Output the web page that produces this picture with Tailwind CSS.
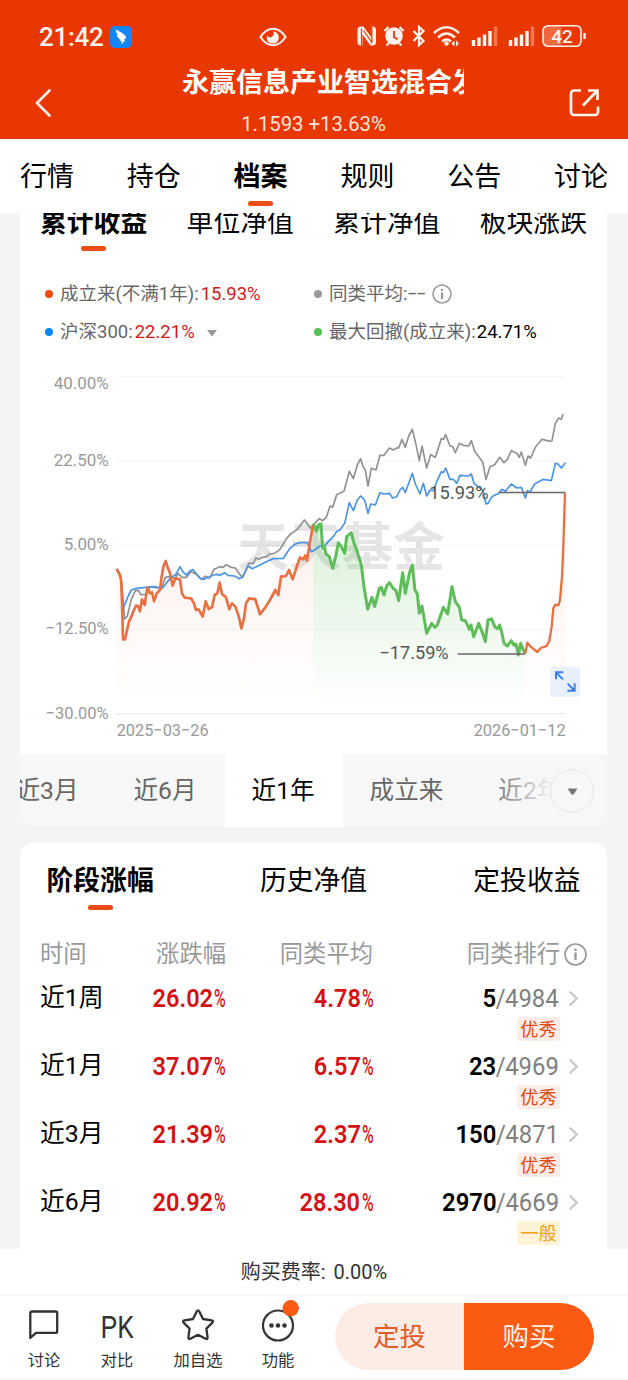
<!DOCTYPE html>
<html lang="zh-CN">
<head>
<meta charset="utf-8">
<meta name="viewport" content="width=device-width, initial-scale=1">
<title>基金档案</title>
<script src="https://cdn.jsdelivr.net/npm/@tailwindcss/browser@4"></script>
</head>
<body class="w-[628px] h-[1380px] overflow-hidden bg-white text-black font-['Roboto','Noto_Sans_CJK_SC',sans-serif]">

<!-- header -->
<header class="h-[139px] bg-[#e83700] text-[#fff3ee] overflow-hidden">
  <div class="h-[63px] pt-[11px] relative flex items-center">
    <span class="ml-[39px] text-[26px] leading-[26px] w-[65px] font-medium tracking-[-0.3px] whitespace-nowrap">21:42</span>
    <svg class="ml-[6px] w-[22px] h-[22px]" viewBox="0 0 22 22"><rect width="22" height="22" rx="5" fill="#1386fb"/><path d="M5.500 3.500C10 5 14 8 16 10.500c.3.500 0 1-.3 1.500l-1.800 2.200h1.600L11 18.500l.8-3-1.600-.4.4-1.200C8.500 12.500 7 10.500 6.700 8.800l1.500.3C6.800 7.500 5.800 5.500 5.500 3.500z" fill="#fff"/></svg>
    <svg class="ml-[127px] w-[28px] h-[20px]" viewBox="0 0 28 20"><path d="M1.500 10C5 4.500 9 1.800 14 1.800S23 4.500 26.500 10C23 15.500 19 18.200 14 18.200S5 15.500 1.500 10z" fill="none" stroke="#fff3ee" stroke-width="2"/><path d="M14.500 4.200c3.500.8 5.300 3.200 5.300 6.200 0 3.600-2.600 6.200-6 6.200-3.500 0-6-2.400-6-5.600 0-1 .2-1.800.6-2.600.8 1.400 1.800 2 3 1.900 2.200-.2 3.800-2.500 3.100-6.100z" fill="#fff3ee"/></svg>
    <svg class="ml-[70px] w-[234px] h-[26px]" viewBox="357 24 234 26" fill="none" stroke="#fff3ee">
      <path d="M361 26.500h2.500l8 11V26.500h1.500a3.500 3.500 0 0 1 3 3.500v12a3.500 3.500 0 0 1-3 3.500h-2.500l-8-11v11H361a3.500 3.500 0 0 1-3.500-3.500V30a3.500 3.500 0 0 1 3.500-3.500z" fill="#fff3ee" stroke="none"/><path d="M361.500 28.500v17M371.800 26.500v17M363.500 30.500l8.500 12" stroke="#e83700" stroke-width="1.200"/>
      <circle cx="394" cy="36" r="8" fill="#fff3ee" stroke-width="1.500"/><path d="M394 31v6l3.500 2.500" stroke="#e83700" stroke-width="1.800"/><path d="M384.500 31l4-4M403.500 31l-4-4M389 43l-2.500 2.500M399 43l2.500 2.500" stroke-width="2.200"/>
      <path d="M413.500 31l10 10-4.500 4V27l4.500 4-10 10" stroke-width="2.200"/>
      <path d="M434 33q12.500-11.500 25 0M438 37.500q8.500-8 17 0M442 41.500q4.500-4 9 0" stroke-width="2.500"/><circle cx="446.500" cy="43.500" r="2.300" fill="#fff3ee" stroke="none"/><path d="M454.500 40.500v6l-3-3zM456 40.500v6l3-3z" fill="#fff3ee" stroke="none"/>
      <g stroke-width="3.400"><path d="M473.500 46v-6M479 46v-8.500M484.500 46v-11.500M490 46v-15"/><path d="M495.500 46V26.500" opacity=".35"/><path d="M510.500 46v-6M516 46v-8.500M521.500 46v-11.500M527 46v-15"/><path d="M532.500 46V26.500" opacity=".35"/></g>
      <rect x="543.500" y="26" width="18.500" height="20" rx="4" fill="#fff" fill-opacity=".25" stroke="none"/><rect x="543" y="25.700" width="38" height="20.600" rx="5" stroke-width="1.600"/><path d="M584.500 33v6" stroke-width="2.500"/>
      <text x="562" y="42.800" text-anchor="middle" font-family="Roboto" font-weight="500" font-size="19" fill="#fff3ee" stroke="none">42</text>
    </svg>
  </div>
  <div class="flex justify-between h-[76px]">
    <svg class="ml-[34px] mt-[25px] w-[18px] h-[30px]" viewBox="0 0 18 30"><path d="M15.500 2.500L3 15l12.500 12.500" fill="none" stroke="#fff3ee" stroke-width="2.600" stroke-linecap="round" stroke-linejoin="round"/></svg>
    <div class="w-[282px] ml-[25px] text-center">
      <h1 class="overflow-hidden whitespace-nowrap text-left text-[27px] leading-[40px] h-[38px] font-bold text-white">永赢信息产业智选混合发</h1>
      <p class="mt-[10px] text-[20.300px] leading-[26px] text-[#ffe6dc] whitespace-nowrap pr-[19px]">1.1593 +13.63%</p>
    </div>
    <svg class="mr-[28px] mt-[25px] w-[31px] h-[30px]" viewBox="0 0 31 30" fill="none" stroke="#fff3ee" stroke-width="2.700"><path d="M12 2.500H5a3 3 0 0 0-3 3v18.500a3 3 0 0 0 3 3h21a3 3 0 0 0 3-3V18.500"/><path d="M14 17.500L27.500 3.500M19 2.500h9.500v9.500"/></svg>
  </div>
</header>

<!-- main tabs -->
<nav class="h-[74px] px-[20px] flex justify-between text-[27px] leading-[38px] pt-[19px] bg-white">
  <span>行情</span><span>持仓</span>
  <span class="font-bold flex flex-col items-center">档案<i class="block w-[25px] h-[5px] rounded-full bg-[#ee4d12] mt-[5px]"></i></span>
  <span>规则</span><span>公告</span><span>讨论</span>
</nav>

<main class="h-[1036px] bg-[#f4f4f4] overflow-hidden px-[20px] pr-[21px]">
  <!-- chart card -->
  <section class="h-[614px] bg-white rounded-b-[14px] overflow-hidden">
    <div class="h-[65px] -mt-[9px] px-[20px] flex justify-between text-[26.800px] leading-[38px]">
      <span class="font-bold flex flex-col items-center">累计收益<i class="block w-[25px] h-[5px] rounded-full bg-[#ee4d12] mt-[4px]"></i></span>
      <span>单位净值</span><span>累计净值</span><span>板块涨跌</span>
    </div>
    <div class="h-[91px] pt-[6px] pl-[25px] grid grid-cols-[269px_1fr] auto-rows-[38px] items-center text-[18.500px] text-[#666] whitespace-nowrap">
      <div class="flex items-center"><i class="w-2 h-2 rounded-full bg-[#ee4d12] mr-[7px]"></i><span class="pt-[2px]">成立来(不满1年):<span class="text-[#d01a1a] ml-[2px]">15.93%</span></span></div>
      <div class="flex items-center"><i class="w-2 h-2 rounded-full bg-[#999] mr-[7px]"></i><span class="pt-[2px]">同类平均:</span><span class="w-[24px] ml-[1px]"><span class="inline-block origin-left scale-x-[1.65] tracking-[0.3px]">--</span></span>
        <svg class="w-[20px] h-[20px]" viewBox="0 0 20 20" fill="none" stroke="#999"><circle cx="10" cy="10" r="9" stroke-width="1.500"/><path d="M10 8.500V15M10 5v2" stroke-width="2.200"/></svg></div>
      <div class="flex items-center"><i class="w-2 h-2 rounded-full bg-[#0f86f2] mr-[7px]"></i><span class="pt-[2px]">沪深300:<span class="text-[#d01a1a] ml-[2px]">22.21%</span></span><svg class="ml-[12px] w-[10px] h-[6px] mt-[2px]" viewBox="0 0 10 6"><path d="M0 0h10L5.500 6h-1z" fill="#999"/></svg></div>
      <div class="flex items-center"><i class="w-2 h-2 rounded-full bg-[#55c154] mr-[7px]"></i><span class="pt-[2px]">最大回撤(成立来):<span class="text-black ml-[1px]">24.71%</span></span></div>
    </div>
    <svg class="block w-[587px] h-[394px]" viewBox="0 0 1761 1182" fill="none" font-family="Roboto, sans-serif">
      <defs>
        <linearGradient id="go" gradientUnits="userSpaceOnUse" x1="0" y1="480" x2="0" y2="1030"><stop offset="0" stop-color="#ee5a24" stop-opacity=".09"/><stop offset="1" stop-color="#ee5a24" stop-opacity="0"/></linearGradient>
        <linearGradient id="gg" gradientUnits="userSpaceOnUse" x1="0" y1="480" x2="0" y2="1040"><stop offset="0" stop-color="#4fba4c" stop-opacity=".22"/><stop offset="1" stop-color="#4fba4c" stop-opacity="0"/></linearGradient>
      </defs>
      <path d="M288 49.500H1635M288 303H1635M288 556H1635M288 808H1635" stroke="#f4f4f4" stroke-width="3"/>
      <path d="M288 1061H1635" stroke="#e9e9e9" stroke-width="4"/>
      <text x="652" y="617" font-family="Noto Sans CJK SC" font-weight="700" font-size="156" textLength="624" fill="#000" fill-opacity=".1">天天基金</text>
      <path fill="url(#go)" d="M290 627L304 665L309 838L334 770L354 738L382 683L402 724L420 690L437 603L458 677L480 658L494 713L514 716L548 770L557 724L576 742L599 668L628 748L664 805L688 715L706 718L720 763L766 690L783 650L798 648L818 658L840 592L861 602L880 492V1040H290zM1516 880L1522 848L1552 876L1588 842L1600 745L1615 736L1626 650L1635 398V1040H1516z"/>
      <path fill="url(#gg)" d="M880 492L889 514L903 492L908 565L938 625L955 548L974 580L980 530L994 518L1024 615L1043 748L1078 685L1092 705L1108 668L1136 722L1148 638L1156 700L1177 615L1198 760L1206 738L1220 820L1252 795L1270 742L1283 762L1296 680L1325 780L1361 830L1376 790L1396 845L1404 780L1439 795L1452 850L1495 885L1502 850L1516 880V1050H880z"/>
      <polyline stroke="#919191" stroke-width="5" stroke-linejoin="round" points="290,627 302,650 309,715 314,778 322,768 334,718 346,692 356,692 362,704 378,703 390,680 425,685 436,652 450,650 466,655 474,640 486,652 500,652 512,635 528,642 545,658 556,648 568,655 582,628 600,620 610,622 618,614 634,622 646,624 656,638 666,652 678,630 686,610 700,610 708,594 716,598 728,592 740,590 748,582 764,580 780,568 800,535 812,522 832,508 840,498 853,480 872,505 884,490 898,476 908,482 920,470 930,438 938,442 950,404 972,394 988,334 1000,356 1012,315 1022,296 1030,322 1036,330 1044,378 1054,325 1068,330 1080,286 1092,286 1108,264 1120,270 1130,264 1136,264 1146,238 1156,262 1166,228 1177,208 1188,254 1198,302 1206,258 1220,324 1232,284 1246,292 1264,236 1270,238 1277,224 1290,258 1298,260 1306,278 1318,250 1330,256 1346,258 1354,242 1364,274 1388,306 1398,358 1410,320 1424,314 1439,292 1452,308 1462,298 1474,272 1490,280 1498,292 1504,276 1516,316 1524,288 1532,294 1546,262 1566,238 1590,244 1596,242 1606,190 1616,174 1624,178 1629,162"/>
      <polyline stroke="#4b94e5" stroke-width="5" stroke-linejoin="round" points="290,627 302,650 309,745 318,725 326,705 334,690 350,685 370,683 400,680 428,684 440,668 456,650 466,645 474,632 480,620 490,637 500,645 510,632 518,629 528,640 540,655 548,658 558,655 570,650 580,645 590,643 600,646 614,638 624,646 644,648 658,656 668,652 684,618 696,626 706,622 720,615 730,610 742,604 760,596 790,595 810,565 826,552 840,548 862,548 874,575 884,570 900,558 912,560 925,545 940,530 950,514 960,510 974,490 988,428 1000,452 1012,420 1022,408 1034,420 1044,460 1052,432 1066,435 1080,398 1092,402 1108,400 1118,414 1130,410 1140,390 1148,382 1156,398 1166,370 1177,340 1186,372 1200,402 1210,370 1220,408 1230,390 1240,392 1250,365 1264,335 1270,338 1277,324 1290,358 1300,358 1310,370 1320,346 1346,348 1354,342 1362,370 1374,380 1388,390 1398,432 1404,430 1416,410 1426,404 1434,402 1446,388 1456,394 1474,372 1490,384 1504,382 1516,414 1522,392 1530,396 1544,372 1570,358 1594,362 1606,310 1614,312 1624,324 1636,308"/>
      <g stroke-width="7" stroke-linejoin="round">
        <polyline stroke="#e97042" stroke-width="8" points="290,627 300,645 304,665 307,760 309,838 315,838 320,815 327,785 334,770 342,750 348,737 354,738 360,754 366,718 374,735 382,683 390,700 396,697 402,724 410,700 420,690 425,650 430,620 437,603 444,625 450,640 458,677 466,655 480,658 486,700 494,713 504,714 514,716 522,730 528,750 536,748 548,770 557,724 566,747 576,742 584,705 592,700 599,668 606,702 618,712 628,748 636,730 646,740 656,768 664,805 672,775 678,730 688,715 706,718 720,763 736,742 750,720 766,690 775,705 783,650 798,648 807,630 818,658 832,615 840,592 850,598 856,586 861,602 870,545 880,492"/>
        <polyline stroke="#5fbd59" stroke-width="9" points="880,492 885,502 889,514 896,494 903,492 908,565 913,560 918,582 928,590 938,625 947,590 955,548 964,560 974,580 980,530 994,518 1002,550 1010,570 1024,615 1032,680 1043,748 1056,712 1064,740 1078,685 1084,682 1092,705 1100,678 1108,668 1120,685 1128,692 1136,722 1148,638 1156,700 1168,640 1177,615 1185,690 1192,702 1198,760 1206,738 1220,820 1235,790 1244,802 1252,795 1270,742 1283,762 1296,680 1306,725 1318,742 1325,780 1336,782 1348,808 1353,795 1361,830 1376,790 1388,820 1396,845 1404,780 1415,777 1424,800 1433,806 1439,795 1446,820 1452,850 1462,858 1474,842 1482,856 1488,852 1495,885 1502,850 1510,870 1516,880"/>
        <polyline stroke="#e97042" points="1516,880 1522,848 1532,860 1542,868 1552,876 1562,864 1580,858 1588,842 1595,800 1600,745 1606,734 1615,736 1620,720 1626,650 1630,560 1635,398"/>
      </g>
      <path d="M1436 397.500H1635M1313 882H1516" stroke="#666" stroke-width="5"/>
      <g font-size="54" fill="#555"><text x="1228" y="417" textLength="178" lengthAdjust="spacingAndGlyphs">15.93%</text><text x="1078" y="898" textLength="208" lengthAdjust="spacingAndGlyphs">−17.59%</text></g>
      <g font-size="51" fill="#999">
        <text x="101" y="88" textLength="165">40.00%</text><text x="101" y="318" textLength="165">22.50%</text><text x="131" y="571" textLength="135">5.00%</text><text x="77" y="823" textLength="189" lengthAdjust="spacingAndGlyphs">−12.50%</text><text x="77" y="1076" textLength="189" lengthAdjust="spacingAndGlyphs">−30.00%</text>
        <text x="290" y="1129" textLength="276" lengthAdjust="spacingAndGlyphs">2025−03−26</text><text x="1361" y="1129" textLength="276" lengthAdjust="spacingAndGlyphs">2026−01−12</text>
      </g>
      <rect x="1591" y="920" width="90" height="90" rx="9" fill="#e8f0fc"/>
      <path d="M1608 958V937h22M1610 939l19 19M1664 970v22h-22M1662 990l-19-19" stroke="#3d80e4" stroke-width="6"/>
    </svg>
    <!-- range tabs -->
    <div class="relative h-[73px] bg-[#f7f7f7] overflow-hidden">
      <div class="flex -ml-[31px] h-full text-[24.600px] leading-[74px] text-[#666] whitespace-nowrap">
        <span class="pl-[26.500px] pr-[28.500px]">近3月</span><span class="pl-[26.500px] pr-[28.500px]">近6月</span><span class="pl-[26.500px] pr-[28.500px] bg-white text-black">近1年</span><span class="pl-[26.500px] pr-[28.500px]">成立来</span><span class="pl-[26.500px]">近2年</span>
      </div>
      <div class="absolute right-0 top-0 h-full w-[120px] flex items-center justify-end pr-[13px] bg-linear-to-r from-[#f7f7f7]/0 via-[#f7f7f7] via-55% to-[#f7f7f7]">
        <div class="w-[44px] h-[44px] rounded-full border-[1.500px] border-[#e7e7e7] flex items-center justify-center"><svg class="w-[11px] h-[7px] mt-[2px]" viewBox="0 0 11 7"><path d="M.5.500h10L6.500 6.500h-2z" fill="#777"/></svg></div>
      </div>
    </div>
  </section>

  <!-- performance card -->
  <section class="mt-[16px] h-[430px] bg-white rounded-t-[12px] overflow-hidden">
    <div class="h-[90px] px-[26.500px] pt-[19px] flex justify-between text-[26.800px] leading-[38px]">
      <span class="font-bold flex flex-col items-center">阶段涨幅<i class="block w-[25px] h-[5px] rounded-full bg-[#e84c16] mt-[5px]"></i></span><span>历史净值</span><span>定投收益</span>
    </div>
    <div class="h-[42px] pl-[20px] grid grid-cols-[106px_80px_147px_214px] items-center text-[23.300px] leading-[40px] text-[#999] whitespace-nowrap">
      <span>时间</span><span class="text-right">涨跌幅</span><span class="text-right">同类平均</span>
      <span class="flex items-center justify-end">同类排行<svg class="ml-[4px] w-[23px] h-[23px]" viewBox="0 0 23 23" fill="none" stroke="#999"><circle cx="11.500" cy="11.500" r="10.500" stroke-width="1.700"/><path d="M11.500 9.500v7.500M11.500 5.500v2.500" stroke-width="2.400"/></svg></span>
    </div>
    <div id="rows"></div>
  </section>
</main>

<!-- fee -->
<div class="h-[47px] flex items-center justify-center text-[20px] leading-[28px] text-[#333] border-b-2 border-[#f6f6f6] bg-white whitespace-nowrap"><span class="pt-[1px]">购买费率:</span><span class="ml-[8px]">0.00%</span></div>

<!-- action bar -->
<footer class="h-[84px] pl-[4px] flex text-[#333] text-[16.300px] leading-[24px] bg-white border-b border-[#f2f2f2]">
  <div class="w-[80px] flex flex-col items-center pt-[13px]"><svg class="w-[32px] h-[32px] mb-[8px]" viewBox="0 0 32 32"><path d="M4 2.500h23.500q1.700 0 1.700 1.700v18q0 1.700-1.700 1.700H8l-5.700 5V4.200Q2.300 2.500 4 2.500z" fill="none" stroke="#333" stroke-width="2.300" stroke-linejoin="round"/></svg>讨论</div>
  <div class="w-[66px] flex flex-col items-center pt-[13px]"><div class="h-[32px] mb-[8px] text-[32px] leading-[36px] scale-x-[.82]">PK</div>对比</div>
  <div class="w-[96px] flex flex-col items-center pt-[13px]"><svg class="w-[34px] h-[32px] mb-[8px]" viewBox="0 0 34 32"><path d="M15.700 2.400q1.300-2 2.600 0l3.700 7.600 8.600 1.300q2.200.5.800 2.300l-6 6 1.200 8.700q.1 2.300-2 1.500L17 25.800l-7.600 4q-2.100.8-2-1.500l1.200-8.700-6-6q-1.400-1.800.8-2.300L12 10z" fill="none" stroke="#333" stroke-width="2.300" stroke-linejoin="round"/></svg>加自选</div>
  <div class="w-[64px] flex flex-col items-center pt-[13px]"><svg class="w-[34px] h-[32px] mb-[8px] overflow-visible" viewBox="0 0 34 32"><circle cx="17" cy="16.500" r="15" fill="none" stroke="#333" stroke-width="2.200"/><circle cx="10.500" cy="16.500" r="2.300" fill="#333"/><circle cx="17" cy="16.500" r="2.300" fill="#333"/><circle cx="23.500" cy="16.500" r="2.300" fill="#333"/><circle cx="29.700" cy="-.8" r="8.200" fill="#f95a14"/></svg>功能</div>
  <div class="ml-[25px] mt-[7px] w-[259px] h-[67px] rounded-full overflow-hidden flex text-[26.500px] leading-[68px] text-center">
    <span class="w-[129px] bg-[#fcece6] text-[#e5592a]">定投</span><span class="flex-1 bg-[#fb5a13] text-[#fff1e8]">购买</span>
  </div>
</footer>

<script>
  const rows = [
    ['近1周', '26.02', '4.78', '5', '4984', '优秀'],
    ['近1月', '37.07', '6.57', '23', '4969', '优秀'],
    ['近3月', '21.39', '2.37', '150', '4871', '优秀'],
    ['近6月', '20.92', '28.30', '2970', '4669', '一般'],
  ];
  const pct = v => `<span class="flex justify-end text-[#d31216] font-semibold"><span class="inline-block origin-right scale-x-[.89]">${v}</span><span class="w-[12px] ml-[1px] font-medium"><span class="inline-block origin-left scale-x-[.6]">%</span></span></span>`;
  document.getElementById('rows').innerHTML = rows.map(([n, a, b, r, t, tag]) => `
    <div class="h-[68px] pl-[20px] grid grid-cols-[106px_80px_147.5px_185.5px_28px] text-[26.5px] leading-[46px] whitespace-nowrap">
      <span class="text-[24.8px] leading-[46px]">${n}</span>${pct(a)}${pct(b)}
      <div class="flex flex-col items-end">
        <div class="h-[42px] origin-right scale-x-[.9]"><span class="font-semibold">${r}</span><span class="text-[#808080]"><span class="mx-[-0.5px]">/</span>${t}</span></div>
        <span class="w-[43px] h-[24px] -mr-[1px] rounded-[3px] text-center text-[18.3px] leading-[26px] ${tag === '优秀' ? 'bg-[#fdece7] text-[#e2490f]' : 'bg-[#fef3d6] text-[#f0a020]'}">${tag}</span>
      </div>
      <svg class="ml-[9px] mt-[15px] w-[11px] h-[17px]" viewBox="0 0 11 17"><path d="M1.500 1.500l7.500 7-7.500 7" fill="none" stroke="#c4c4c4" stroke-width="2"/></svg>
    </div>`).join('');
</script>
</body>
</html>
